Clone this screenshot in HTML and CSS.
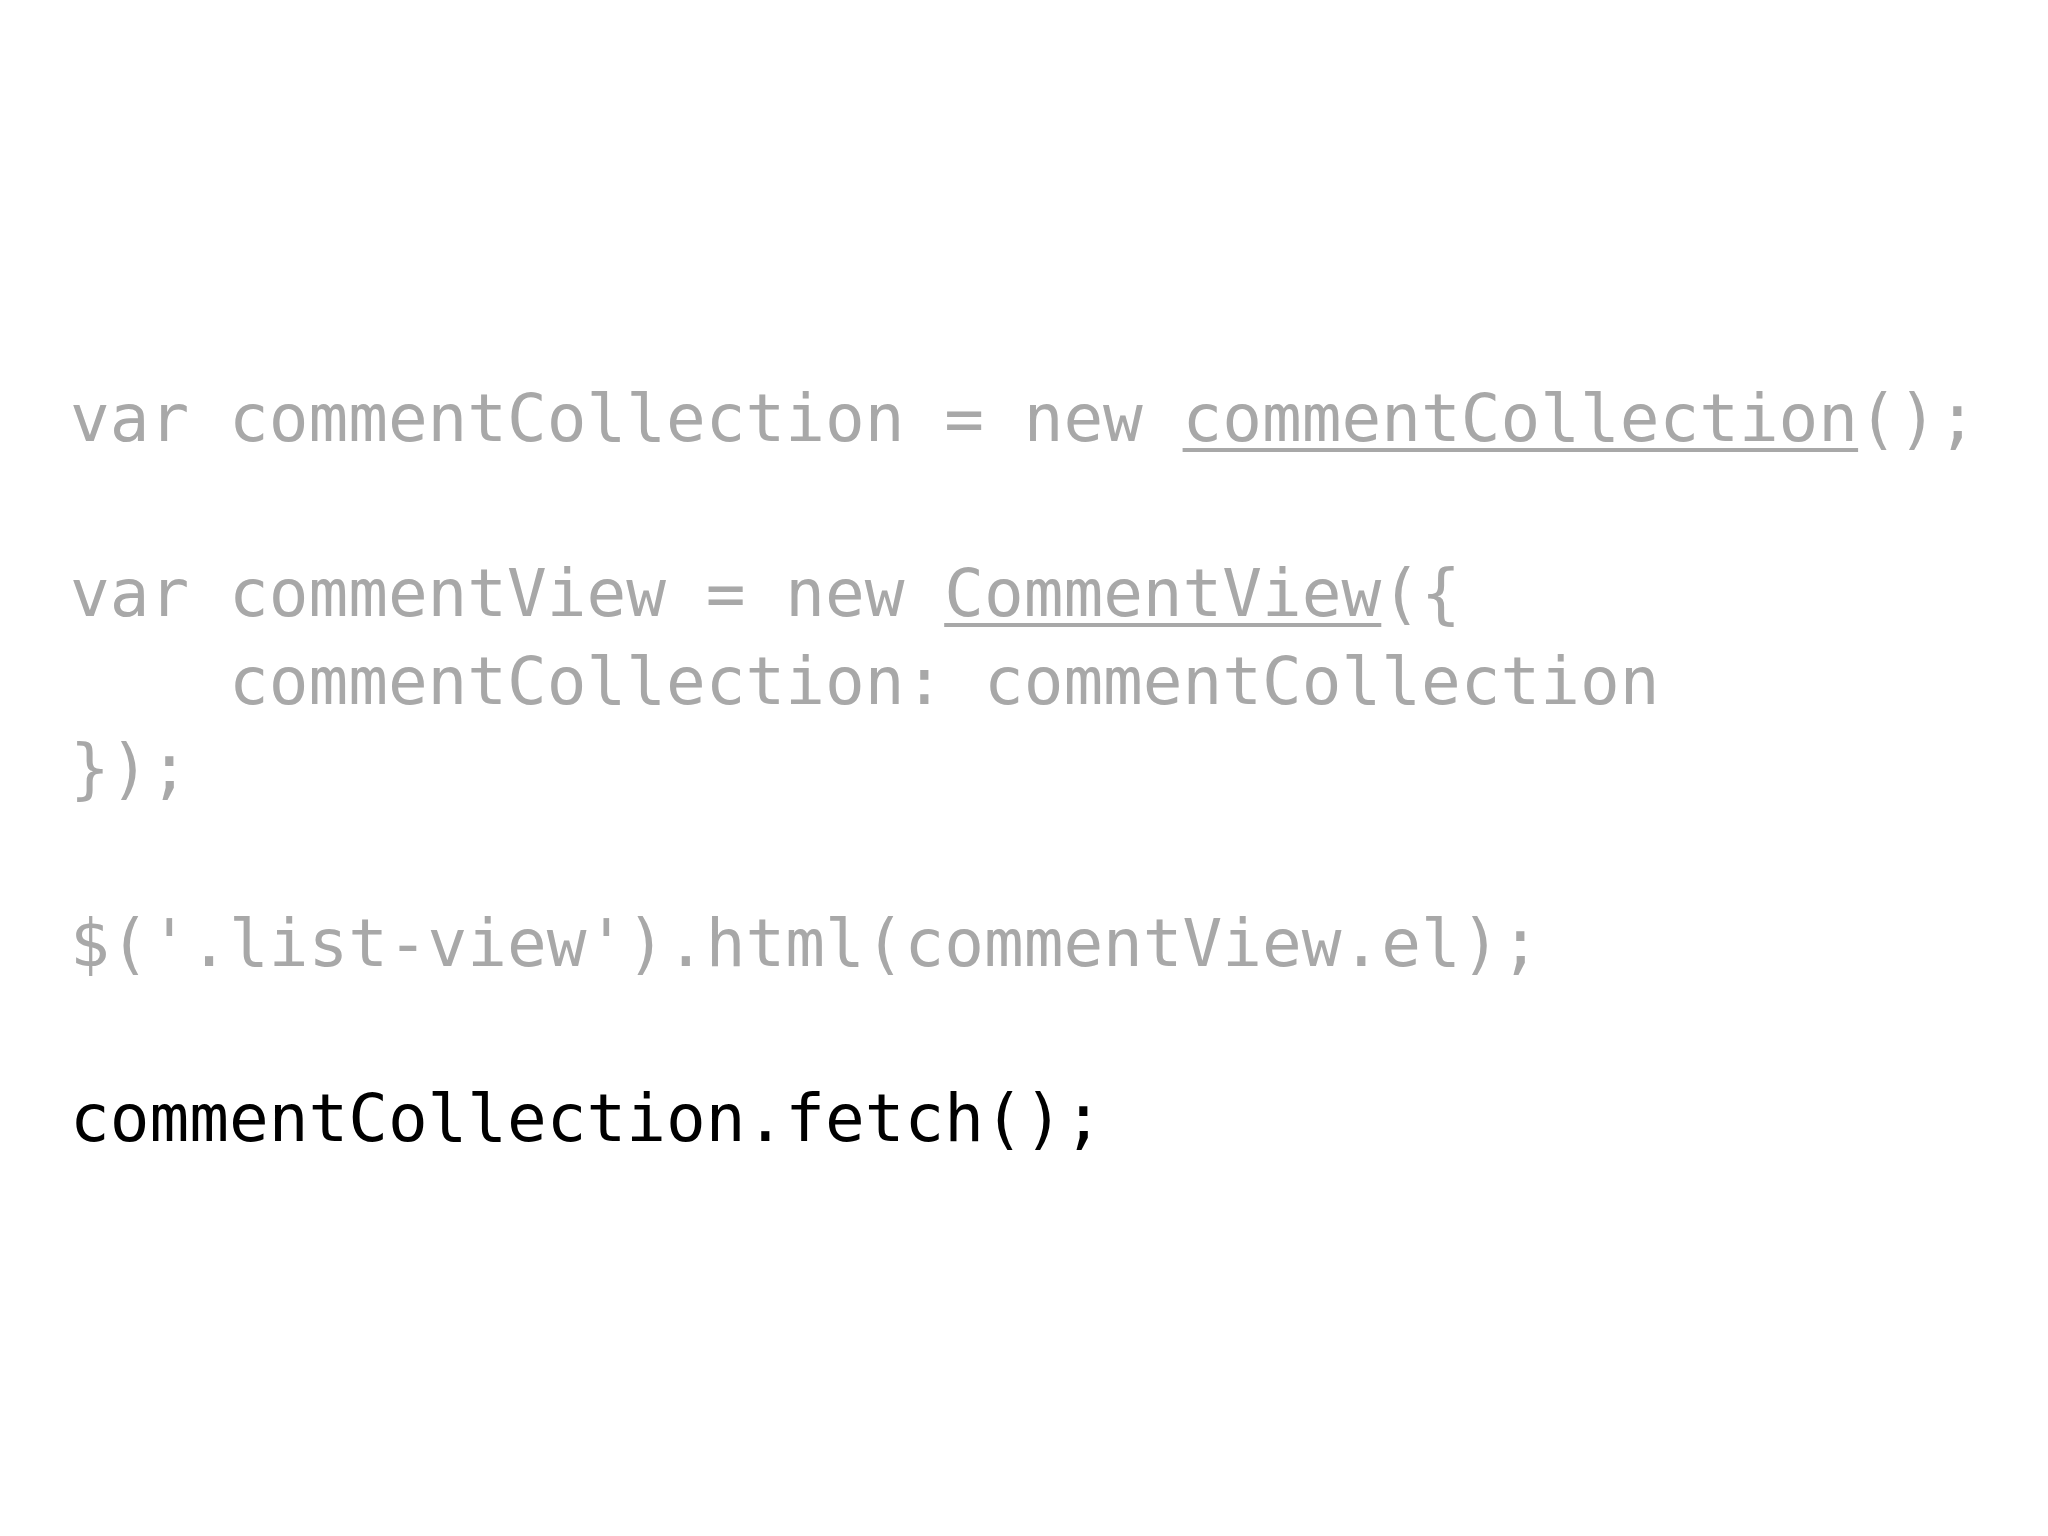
FILE: index.html
```html
<!DOCTYPE html>
<html>
<head>
<meta charset="utf-8">
<link rel="stylesheet" href="styles.css">
</head>
<body>
<main class="slide">
  <div class="code">
    <div class="line dim"><span>var commentCollection = new </span><span class="ref">commentCollection</span><span>();</span></div>
    <div class="line blank"></div>
    <div class="line dim"><span>var commentView = new </span><span class="ref">CommentView</span><span>({</span></div>
    <div class="line dim"><span>    commentCollection: commentCollection</span></div>
    <div class="line dim"><span>});</span></div>
    <div class="line blank"></div>
    <div class="line dim"><span>$('.list-view').html(commentView.el);</span></div>
    <div class="line blank"></div>
    <div class="line active"><span>commentCollection.fetch();</span></div>
  </div>
</main>
</body>
</html>
```

FILE: styles.css
```css
html, body {
  margin: 0;
  padding: 0;
  background: #ffffff;
}

.slide {
  width: 2048px;
  height: 1536px;
  box-sizing: border-box;
  padding: 375px 0 0 70px;
}

.code {
  display: flex;
  flex-direction: column;
  font-family: "DejaVu Sans Mono", "Liberation Mono", monospace;
  font-size: 66px;
  line-height: 87.5px;
}

.line {
  white-space: pre;
  height: 87.5px;
}

.dim {
  color: #a8a8a8;
}

.active {
  color: #000000;
}

.ref {
  text-decoration: underline;
  text-decoration-thickness: 4px;
  text-underline-offset: 7px;
}
```
